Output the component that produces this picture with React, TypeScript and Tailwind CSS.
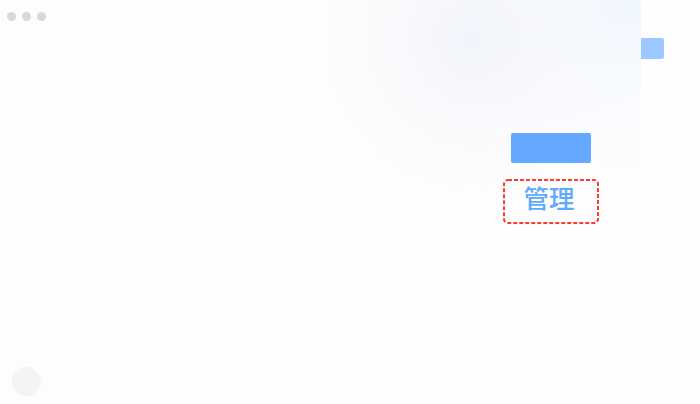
const washes =
  "bg-[radial-gradient(ellipse_165px_170px_at_470px_40px,rgba(240,243,250,0.85),rgba(246,247,251,0.5)_50%,rgba(254,254,254,0)),radial-gradient(ellipse_270px_190px_at_641px_0px,rgba(240,247,254,1),rgba(246,249,254,0.7)_50%,rgba(254,254,254,0))]";

function WindowDots() {
  return (
    <div className="flex gap-1.5 pt-3 pl-[7px]">
      <span className="size-[9px] rounded-full bg-[#d8d8d8]" />
      <span className="size-[9px] rounded-full bg-[#d8d8d8]" />
      <span className="size-[9px] rounded-full bg-[#d8d8d8]" />
    </div>
  );
}

function DashedOutline() {
  return (
    <svg className="absolute inset-0" width="96" height="45" viewBox="0 0 96 45" fill="none">
      <rect x="1" y="1" width="94" height="43" rx="4" stroke="#ff3b30" strokeWidth="2" strokeDasharray="4 2" />
    </svg>
  );
}

export default function App() {
  return (
    <div className="flex h-[404px] w-[700px] overflow-hidden bg-[#fefefe] font-['Noto_Sans_CJK_SC',sans-serif]">
      <div className={`flex w-[641px] shrink-0 rounded-tr-[5px] ${washes}`}>
        <aside className="flex w-[144px] shrink-0 flex-col justify-between bg-[#fdfdfd]">
          <WindowDots />
          <div className="flex items-center gap-2.5 pb-2 pl-3">
            <span className="size-[29px] rounded-full bg-[#f4f4f4]" />
            <span className="text-sm leading-5 text-white">张三</span>
          </div>
        </aside>
        <main className="flex flex-1 flex-col items-end pt-[133px] pr-[42px]">
          <div className="mr-2 h-[30px] w-20 rounded-[2px] bg-[#64a8ff]" />
          <button className="relative mt-4 flex h-[45px] w-24 items-start justify-center pr-1 text-[25.5px] leading-[35px] font-medium text-[#5fa9ff]">
            管理
            <DashedOutline />
          </button>
        </main>
      </div>
      <div className="mt-[38px] h-[21px] w-[23px] rounded-r-[2px] bg-[#9dc8ff]" />
    </div>
  );
}
